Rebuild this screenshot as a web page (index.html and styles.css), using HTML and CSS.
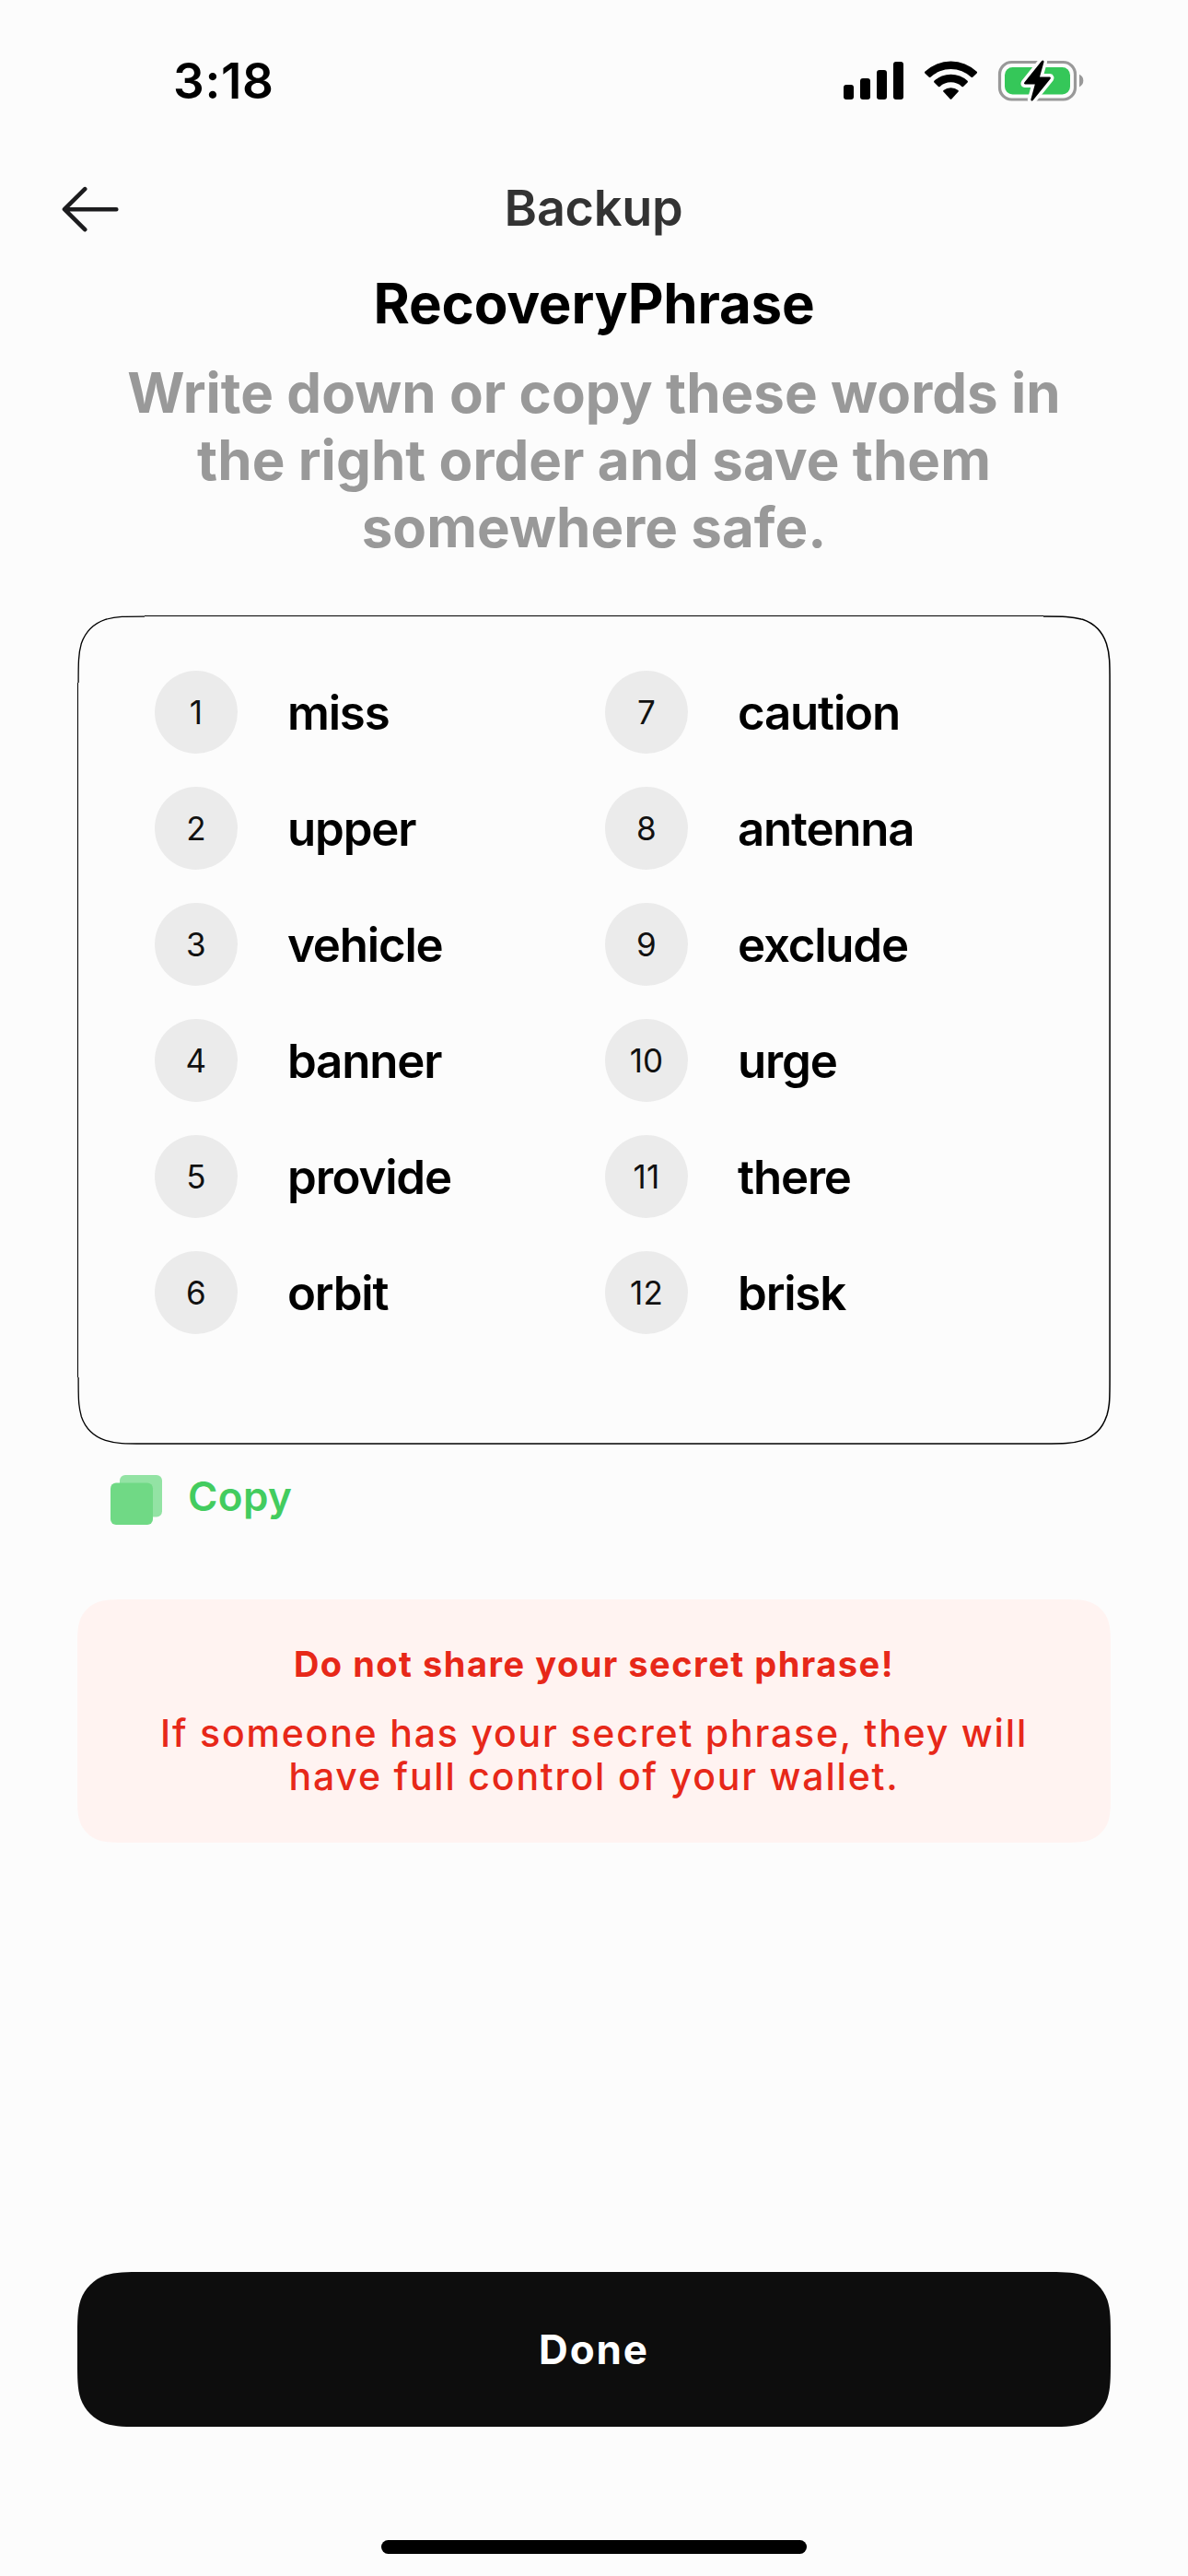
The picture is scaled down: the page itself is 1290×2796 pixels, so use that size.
FILE: index.html
```
<!DOCTYPE html>
<html lang="en">
<head>
<meta charset="utf-8">
<title>Backup</title>
<link rel="stylesheet" href="styles.css">
</head>
<body>
<div class="screen">
  <div class="status-bar">
    <span class="time">3:18</span>
    <svg class="status-icons" width="262" height="48" viewBox="916 63 262 48" aria-hidden="true">
      <rect x="916" y="91" width="11" height="16" rx="3"/>
      <rect x="934" y="84" width="11" height="23" rx="3"/>
      <rect x="952" y="75" width="11" height="32" rx="3"/>
      <rect x="970" y="66" width="11" height="41" rx="3"/>
      <path d="M1004.3 78.4 Q1003.6 77.6 1004.3 76.8 A41 41 0 0 1 1060.7 76.8 Q1061.4 77.6 1060.7 78.4 L1056.2 82.8 Q1055.4 83.4 1054.6 82.8 A32 32 0 0 0 1010.4 82.8 Q1009.6 83.4 1008.8 82.8 Z"/>
      <path d="M1014.4 88.4 Q1013.7 87.6 1014.4 86.8 A26.5 26.5 0 0 1 1050.6 86.8 Q1051.3 87.6 1050.6 88.4 L1046 93 Q1045.2 93.6 1044.4 93 A17.6 17.6 0 0 0 1020.6 93 Q1019.8 93.6 1019 93 Z"/>
      <path d="M1024.4 98.4 Q1023.8 97.7 1024.5 97 A12.6 12.6 0 0 1 1040.5 97 Q1041.2 97.7 1040.6 98.4 L1033.3 106.4 Q1032.5 107.2 1031.7 106.4 Z"/>
      <rect x="1085.5" y="66.5" width="82" height="40.5" rx="13" fill="none" stroke="#999" stroke-width="3.2"/>
      <path d="M1172 79.8 A7.5 7.5 0 0 1 1172 93.4 Z" fill="#999"/>
      <rect x="1091" y="72" width="71" height="29.5" rx="8.5" fill="#35c759"/>
      <path d="M1131.2 65 L1112.3 88.6 Q1111.3 90.4 1113 90.4 L1123.8 90.4 L1119.3 107 Q1119.6 109.4 1121.6 108 L1140.6 84.6 Q1141.6 82.8 1139.8 82.6 L1129 82.6 L1133.6 66 Q1133.4 63.4 1131.2 65 Z" fill="#000" stroke="#fcfcfc" stroke-width="7" stroke-linejoin="round" paint-order="stroke"/>
    </svg>
  </div>

  <header class="nav">
    <svg class="back" width="62" height="52" viewBox="0 0 62 52" role="img" aria-label="Back">
      <path d="M25.2 4.2 L3 26.2 L25.2 48.2 M3.5 26.2 H59.3" fill="none" stroke="#1c1c1e" stroke-width="4.6" stroke-linecap="round" stroke-linejoin="round"/>
    </svg>
    <span class="nav-title">Backup</span>
  </header>

  <h1 class="title">RecoveryPhrase</h1>
  <p class="lead">Write down or copy these words in the right order and save them somewhere safe.</p>

  <section class="card">
    <svg class="shape" viewBox="0 0 1122 900" fill="none" stroke="#000" aria-hidden="true">
      <path d="M73 .5 H1049"/>
      <path d="M.5 73 V827"/>
      <path stroke-width="1.3" d="M73 1.1 C52 1.1 42 1.1 32 4 L30.5 4.3 C18 8.6 8.6 18 4.3 30.5 C1.1 41.7 1.1 52.2 1.1 73"/>
      <path stroke-width="1.3" d="M1.1 827 C1.1 848 1.1 858 4 868 L4.3 869.5 C8.6 882 18 891.2 30.5 895.4 C41.7 899 52.2 899 73 899"/>
      <path stroke-width="1.5" d="M1049 1.1 C1070 1.1 1080 1.1 1090 4 L1091.5 4.3 C1104 8.6 1113.2 18 1117.4 30.5 C1121.1 41.7 1121.1 52.2 1121.1 73 V827 C1121.1 848 1121.1 858 1118 868 L1117.4 869.5 C1113.2 882 1104 891.2 1091.5 895.4 C1080 899 1070 899 1049 899 H73"/>
    </svg>
    <div class="words">
      <ol class="column">
        <li class="row"><span class="num">1</span><span class="word">miss</span></li>
        <li class="row"><span class="num">2</span><span class="word">upper</span></li>
        <li class="row"><span class="num">3</span><span class="word">vehicle</span></li>
        <li class="row"><span class="num">4</span><span class="word">banner</span></li>
        <li class="row"><span class="num">5</span><span class="word">provide</span></li>
        <li class="row"><span class="num">6</span><span class="word">orbit</span></li>
      </ol>
      <ol class="column">
        <li class="row"><span class="num">7</span><span class="word">caution</span></li>
        <li class="row"><span class="num">8</span><span class="word">antenna</span></li>
        <li class="row"><span class="num">9</span><span class="word">exclude</span></li>
        <li class="row"><span class="num">10</span><span class="word">urge</span></li>
        <li class="row"><span class="num">11</span><span class="word">there</span></li>
        <li class="row"><span class="num">12</span><span class="word">brisk</span></li>
      </ol>
    </div>
  </section>

  <div class="copy">
    <svg class="copy-icon" width="56" height="54" viewBox="0 0 56 54" aria-hidden="true">
      <rect x="10" y="0" width="46" height="45.5" rx="6" fill="#93e3a4"/>
      <rect x="0" y="8.5" width="46" height="45.5" rx="6" fill="#70d985"/>
    </svg>
    <span class="copy-label">Copy</span>
  </div>

  <section class="warning">
    <svg class="shape" viewBox="0 0 1122 264" fill="#fff3f1" aria-hidden="true">
      <path d="M55 0 H1067 C1082.8 0 1090.7 0 1097.9 2.4 L1099.3 2.7 C1108.6 6.1 1115.9 13.4 1119.3 22.7 C1122 31.3 1122 39.2 1122 55 V209 C1122 224.8 1122 232.7 1119.3 241.3 C1115.9 250.6 1108.6 257.9 1099.3 261.3 C1090.7 264 1082.8 264 1067 264 H55 C39.2 264 31.3 264 22.7 261.3 C13.4 257.9 6.1 250.6 2.7 241.3 C0 232.7 0 224.8 0 209 V55 C0 39.2 0 31.3 2.7 22.7 C6.1 13.4 13.4 6.1 22.7 2.7 C31.3 0 39.2 0 55 0 Z"/>
    </svg>
    <div class="warning-text">
      <strong class="warning-title">Do not share your secret phrase!</strong>
      <p class="warning-body">If someone has your secret phrase, they will have full control of your wallet.</p>
    </div>
  </section>

  <button class="done" type="button">
    <svg class="shape" viewBox="0 0 1122 168" fill="#0d0d0d" aria-hidden="true">
      <path d="M73 0 H1049 C1070 0 1080 0 1090 3.1 L1091.7 3.6 C1104.1 8.1 1113.9 17.9 1118.4 30.3 C1122 41.7 1122 52.2 1122 73 V95 C1122 115.8 1122 126.3 1118.4 137.7 C1113.9 150.1 1104.1 159.9 1091.7 164.4 C1080 168 1070 168 1049 168 H73 C52 168 42 168 30.3 164.4 C17.9 159.9 8.1 150.1 3.6 137.7 C0 126.3 0 115.8 0 95 V73 C0 52.2 0 41.7 3.6 30.3 C8.1 17.9 17.9 8.1 30.3 3.6 C42 0 52 0 73 0 Z"/>
    </svg>
    <span class="done-label">Done</span>
  </button>

  <div class="home-indicator"></div>
</div>
</body>
</html>
```
FILE: styles.css
```
* {
  box-sizing: border-box;
}

body {
  margin: 0;
  background: #fcfcfc;
  color: #000;
  font-family: Inter, "Liberation Sans", sans-serif;
}

.screen {
  display: flex;
  flex-direction: column;
  width: 1290px;
  height: 2796px;
  padding: 0 84px 24px;
  overflow: hidden;
}

/* status bar */
.status-bar {
  display: flex;
  align-items: center;
  justify-content: space-between;
  height: 175px;
  padding: 0 28px 0 104px;
}

.time {
  font-size: 53px;
  font-weight: 600;
  letter-spacing: 0.66px;
}

/* navigation */
.nav {
  display: grid;
  grid-template-columns: 1fr auto 1fr;
  align-items: center;
  height: 100px;
  margin: 0 -17px;
}

.back {
  margin-top: 3px;
}

.nav-title {
  margin-right: 1px;
  color: #333;
  font-size: 54px;
  font-weight: 600;
  letter-spacing: -0.3px;
}

/* headings */
.title {
  margin: 18px 0 0;
  font-size: 60px;
  font-weight: 700;
  line-height: 73px;
  letter-spacing: -0.2px;
  text-align: center;
}

.lead {
  margin: 24px 0 0;
  padding: 0 48px;
  color: #999;
  font-size: 60px;
  font-weight: 700;
  line-height: 73px;
  letter-spacing: 0.05px;
  text-align: center;
}

/* smooth-cornered surfaces: the shape shares one grid cell with the content */
.card,
.warning,
.done {
  display: grid;
}

.card > *,
.warning > *,
.done > * {
  grid-area: 1 / 1;
}

.shape {
  display: block;
  width: 100%;
  height: 100%;
}

/* recovery words */
.card {
  height: 900px;
  margin-top: 59px;
}

.words {
  display: grid;
  grid-template-columns: 489px 1fr;
  padding: 60px 0 0 84px;
}

.column {
  display: flex;
  flex-direction: column;
  gap: 36px;
  margin: 0;
  padding: 0;
  list-style: none;
}

.row {
  display: flex;
  align-items: center;
  gap: 54px;
  height: 90px;
}

.num {
  display: flex;
  align-items: center;
  justify-content: center;
  width: 90px;
  height: 90px;
  padding-bottom: 1px;
  border-radius: 50%;
  background: #ebebeb;
  color: #111;
  font-size: 35px;
  letter-spacing: 0.2px;
}

.word {
  font-size: 51px;
  font-weight: 600;
  letter-spacing: -1.2px;
}

/* copy action */
.copy {
  display: flex;
  align-items: flex-start;
  gap: 28px;
  height: 64px;
  margin-top: 28px;
  padding-left: 36px;
}

.copy-icon {
  margin-top: 5px;
}

.copy-label {
  color: #43cc5f;
  font-size: 44px;
  font-weight: 600;
  line-height: 56px;
  letter-spacing: 0.4px;
}

/* warning */
.warning {
  height: 264px;
  margin-top: 76px;
}

.warning-text {
  padding: 46px 80px 0;
  color: #e72819;
  text-align: center;
}

.warning-title {
  display: block;
  font-size: 38px;
  font-weight: 700;
  line-height: 48px;
  letter-spacing: 1.5px;
}

.warning-body {
  margin: 28px 0 0;
  font-size: 41px;
  font-weight: 500;
  line-height: 47.4px;
  letter-spacing: 1.8px;
}

/* primary button */
.done {
  height: 168px;
  margin-top: auto;
  padding: 0;
  border: 0;
  background: none;
}

.done-label {
  align-self: center;
  justify-self: center;
  color: #fff;
  font-family: Inter, "Liberation Sans", sans-serif;
  font-size: 44px;
  font-weight: 700;
  letter-spacing: 1.9px;
}

.home-indicator {
  flex: none;
  align-self: center;
  width: 462px;
  height: 15px;
  margin-top: 123px;
  border-radius: 8px;
  background: #000;
}
```
